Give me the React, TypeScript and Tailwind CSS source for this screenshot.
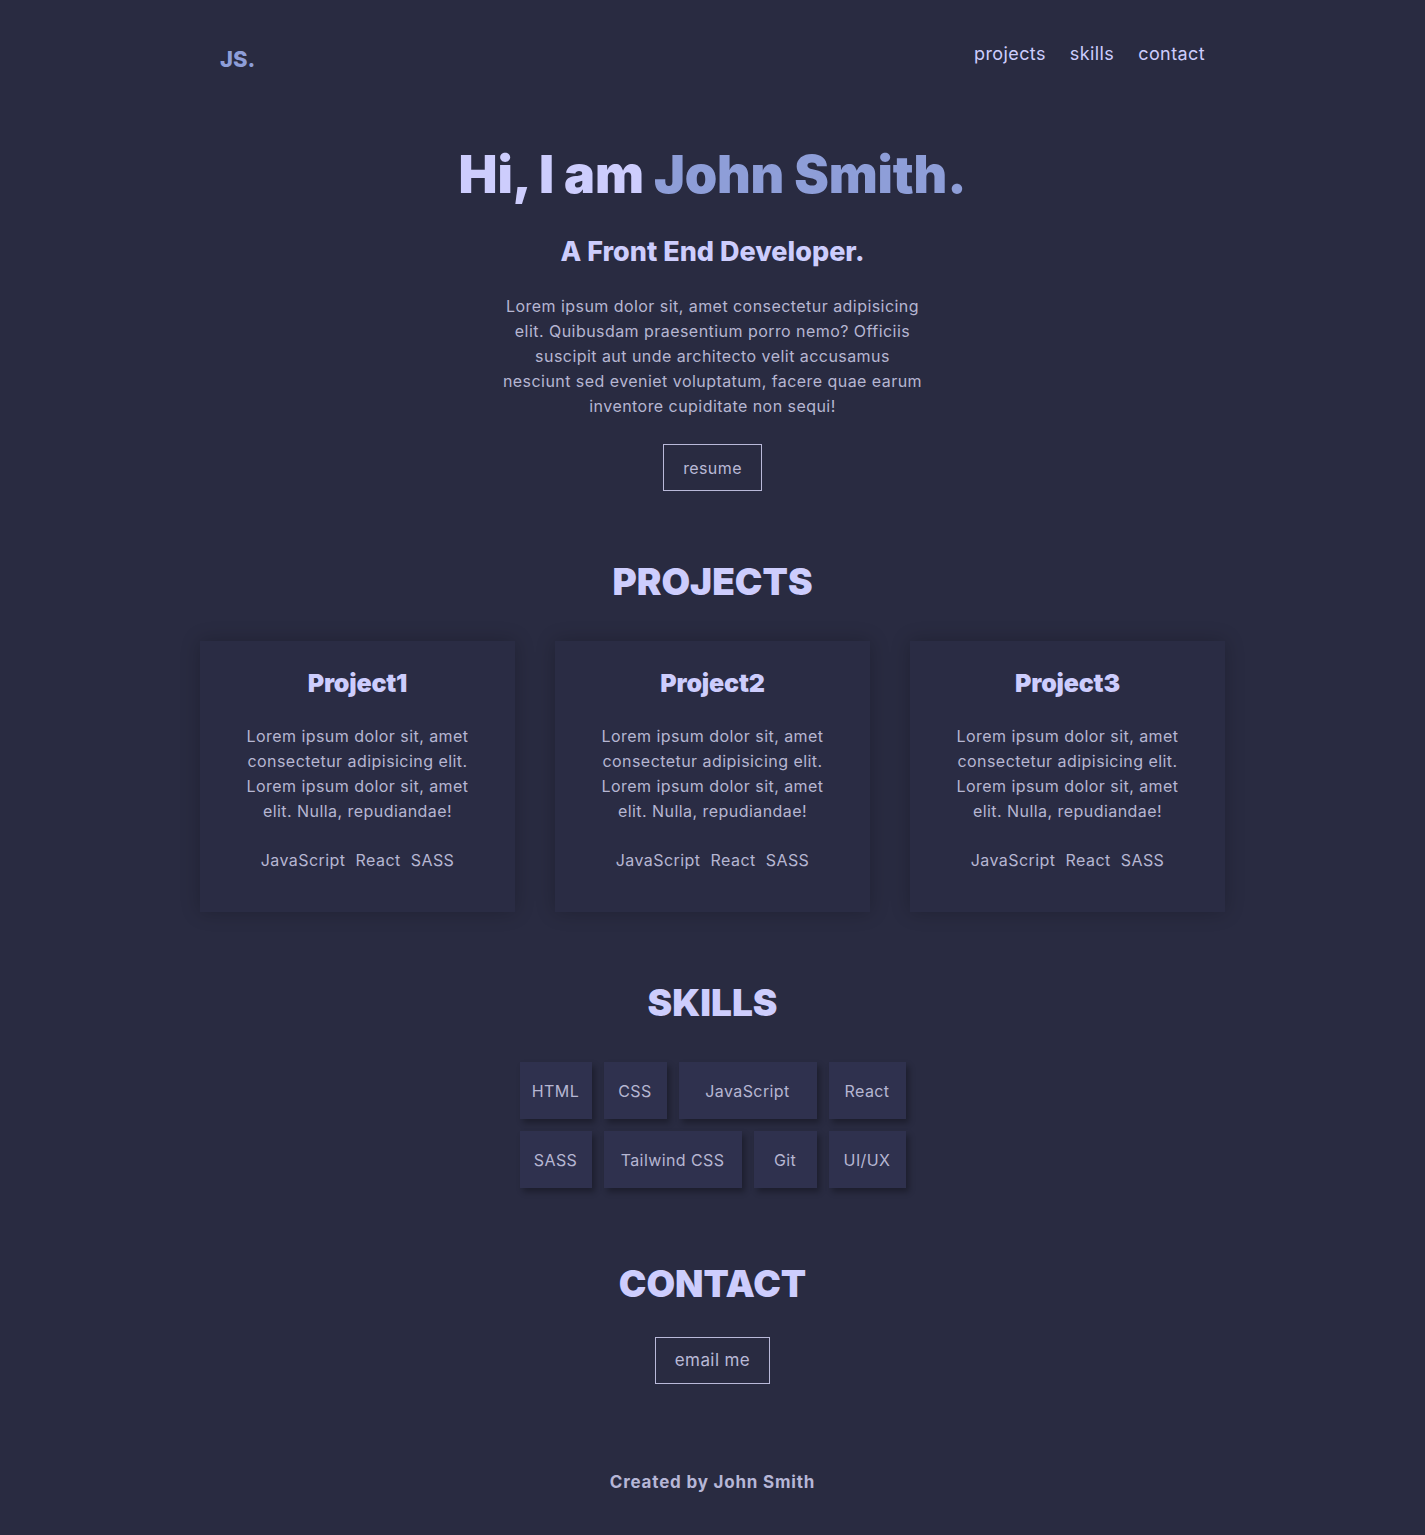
const projects = [
	{ id: 1, title: 'Project1' },
	{ id: 2, title: 'Project2' },
	{ id: 3, title: 'Project3' },
];

const skillRows = [
	[
		{ name: 'HTML', w: 'w-[72px]' },
		{ name: 'CSS', w: 'w-[63px]' },
		{ name: 'JavaScript', w: 'w-[138px]' },
		{ name: 'React', w: 'w-[77px]' },
	],
	[
		{ name: 'SASS', w: 'w-[72px]' },
		{ name: 'Tailwind CSS', w: 'w-[138px]' },
		{ name: 'Git', w: 'w-[63px]' },
		{ name: 'UI/UX', w: 'w-[77px]' },
	],
];

const SectionTitle: React.FC<{ text: string }> = ({ text }) => (
	<h2 className="text-center text-[37px] leading-[48px] font-black text-[#cdcdfd]">{text}</h2>
);

const OutlineButton: React.FC<{ text: string; className?: string }> = ({ text, className }) => (
	<a
		href="#"
		className={
			'flex items-center justify-center h-[47px] border border-[#b9b9d9] tracking-[0.4px] text-[#b9b9d6] ' +
			(className ?? '')
		}
	>
		{text}
	</a>
);

export default function App() {
	return (
		<div className="min-h-[1535px] bg-[#292b41] font-['Inter','Noto_Sans',sans-serif] text-[#b6b6d2]">
			<div className="mx-auto w-[1025px]">
				<header className="flex items-start justify-between px-5 pt-[34px]">
					<a href="#" className="mt-[9px] text-[22px] font-extrabold text-[#8e9ed8]">
						JS.
					</a>
					<nav className="mt-[6px] flex gap-6 text-[18px] tracking-[0.4px] text-[#cdcdfd]">
						<a href="#projects">projects</a>
						<a href="#skills">skills</a>
						<a href="#contact">contact</a>
					</nav>
				</header>

				<section className="flex flex-col items-center mt-[69px]">
					<h1 className="text-[52px] leading-[60px] font-black tracking-[-0.2px] text-[#cdcdfd]">
						Hi, I am <span className="text-[#8e9ed8]">John Smith.</span>
					</h1>
					<h3 className="mt-[31px] text-[27px] leading-[32px] font-extrabold text-[#cdcdfd]">
						A Front End Developer.
					</h3>
					<p className="mt-[26px] w-[426px] text-center text-[16px] leading-[25px] tracking-[0.45px]">
						Lorem ipsum dolor sit, amet consectetur adipisicing elit. Quibusdam praesentium porro nemo?
						Officiis suscipit aut unde architecto velit accusamus nesciunt sed eveniet voluptatum, facere
						quae earum inventore cupiditate non sequi!
					</p>
					<OutlineButton text="resume" className="mt-[25px] w-[99px] text-[16px]" />
				</section>

				<section id="projects" className="mt-[67px]">
					<SectionTitle text="PROJECTS" />
					<div className="mt-[35px] grid grid-cols-3 gap-10">
						{projects.map((p) => (
							<div
								key={p.id}
								className="flex h-[271px] flex-col items-center bg-[#2a2c44] pt-[27px] shadow-[0_0_18px_rgba(0,0,0,0.22)]"
							>
								<h3 className="text-[25px] leading-[30px] font-black tracking-[-0.2px] text-[#cdcdfd]">
									{p.title}
								</h3>
								<p className="mt-[26px] w-[235px] text-center text-[16px] leading-[25px] tracking-[0.45px]">
									Lorem ipsum dolor sit, amet consectetur adipisicing elit. Lorem ipsum dolor sit, amet
									elit. Nulla, repudiandae!
								</p>
								<div className="mt-[24px] flex gap-[10px] text-[16px] leading-[25px] tracking-[0.45px]">
									<span>JavaScript</span>
									<span>React</span>
									<span>SASS</span>
								</div>
							</div>
						))}
					</div>
				</section>

				<section id="skills" className="mt-[67px]">
					<SectionTitle text="SKILLS" />
					<div className="mt-[35px] flex flex-col items-center gap-3">
						{skillRows.map((row, i) => (
							<div key={i} className="flex gap-3">
								{row.map((s) => (
									<div
										key={s.name}
										className={
											s.w +
											' flex h-[57px] items-center justify-center bg-[#2f314e] text-[16px] tracking-[0.4px] shadow-[3px_4px_6px_rgba(0,0,0,0.3)]'
										}
									>
										{s.name}
									</div>
								))}
							</div>
						))}
					</div>
				</section>

				<section id="contact" className="mt-[72px] flex flex-col items-center">
					<SectionTitle text="CONTACT" />
					<OutlineButton text="email me" className="mt-[29px] w-[115px] text-[17px]" />
				</section>

				<footer className="mt-[86px] pb-[42px] text-center text-[17px] font-bold tracking-[0.8px] text-[#b6b6d6]">
					Created by John Smith
				</footer>
			</div>
		</div>
	);
}
